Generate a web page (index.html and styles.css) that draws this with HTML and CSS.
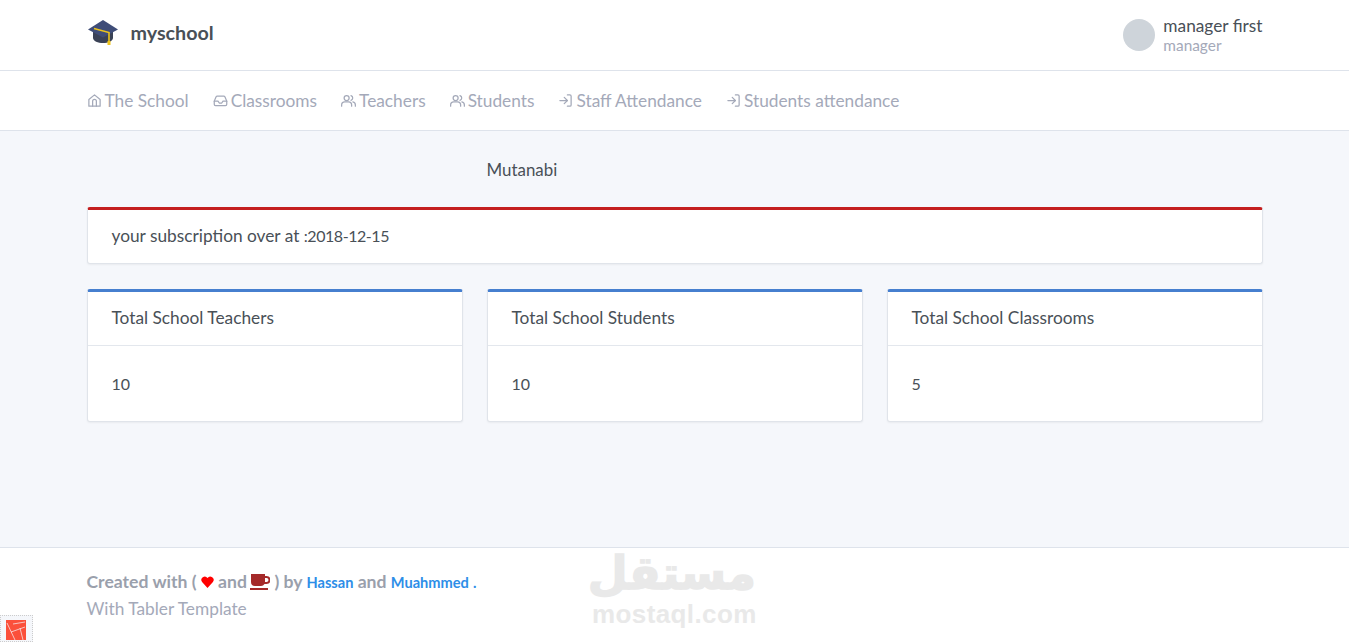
FILE: index.html
```html
<!DOCTYPE html>
<html lang="en">
<head>
<meta charset="utf-8">
<title>myschool</title>
<link rel="stylesheet" href="styles.css">
</head>
<body>
<div class="page">
  <header class="topbar">
    <div class="container topbar-inner">
      <a class="brand">
        <svg class="brand-logo" viewBox="0 0 32 32" width="32" height="32" aria-hidden="true">
          <path d="M6 13v9c0 3 5 5 10 5s10-2 10-5v-9z" fill="#3a4256"/>
          <path d="M1 13.500 16 4l15 9.500L16 21.500z" fill="#3f4d78"/>
          <path d="M7 12.500l15 4v9" fill="none" stroke="#eec41a" stroke-width="1.600"/>
          <rect x="20.500" y="25" width="3" height="4" fill="#eec41a"/>
        </svg>
        <span class="brand-name">myschool</span>
      </a>
      <div class="user">
        <span class="avatar"></span>
        <div class="user-text">
          <div class="user-name">manager first</div>
          <div class="user-role">manager</div>
        </div>
      </div>
    </div>
  </header>

  <nav class="navbar">
    <div class="container nav-inner">
      <a class="nav-link">
        <svg class="nav-icon" viewBox="0 0 24 24"><path d="M3 10.500 12 3l9 7.500V21H3z"/><path d="M9 21v-8a3 3 0 0 1 6 0v8"/></svg>The School
      </a>
      <a class="nav-link">
        <svg class="nav-icon" viewBox="0 0 24 24"><path d="M2 13v5a2 2 0 0 0 2 2h16a2 2 0 0 0 2-2v-5l-3-7a2 2 0 0 0-2-1H7a2 2 0 0 0-2 1z"/><path d="M2 13h6l2 3h4l2-3h6"/></svg>Classrooms
      </a>
      <a class="nav-link">
        <svg class="nav-icon" viewBox="0 0 24 24"><circle cx="9" cy="8" r="4"/><path d="M1 21v-2a5 5 0 0 1 5-5h6a5 5 0 0 1 5 5v2"/><path d="M16 4.200a4 4 0 0 1 0 7.600M19 14.200a5 5 0 0 1 4 4.800v2"/></svg>Teachers
      </a>
      <a class="nav-link">
        <svg class="nav-icon" viewBox="0 0 24 24"><circle cx="9" cy="8" r="4"/><path d="M1 21v-2a5 5 0 0 1 5-5h6a5 5 0 0 1 5 5v2"/><path d="M16 4.200a4 4 0 0 1 0 7.600M19 14.200a5 5 0 0 1 4 4.800v2"/></svg>Students
      </a>
      <a class="nav-link">
        <svg class="nav-icon" viewBox="0 0 24 24"><path d="M15 3h4a2 2 0 0 1 2 2v14a2 2 0 0 1-2 2h-4"/><path d="M10 17l5-5-5-5"/><path d="M15 12H3"/></svg>Staff Attendance
      </a>
      <a class="nav-link">
        <svg class="nav-icon" viewBox="0 0 24 24"><path d="M15 3h4a2 2 0 0 1 2 2v14a2 2 0 0 1-2 2h-4"/><path d="M10 17l5-5-5-5"/><path d="M15 12H3"/></svg>Students attendance
      </a>
    </div>
  </nav>

  <main class="content">
    <div class="container">
      <div class="grid title-row">
        <span></span>
        <div class="school-name">Mutanabi</div>
      </div>
      <div class="card card-alert">
        <div class="alert-body">your subscription over at <span class="date">:2018-12-15</span></div>
      </div>
      <div class="grid">
        <section class="card card-stat">
          <div class="card-header">Total School Teachers</div>
          <div class="card-body">10</div>
        </section>
        <section class="card card-stat">
          <div class="card-header">Total School Students</div>
          <div class="card-body">10</div>
        </section>
        <section class="card card-stat">
          <div class="card-header">Total School Classrooms</div>
          <div class="card-body">5</div>
        </section>
      </div>
    </div>
  </main>

  <footer class="footer">
    <div class="container">
      <div class="credit">Created with (
        <svg class="heart" viewBox="0 0 24 24"><path d="M12 23 2 12A6.200 6.200 0 0 1 12 4.500 6.200 6.200 0 0 1 22 12z"/></svg>
        and
        <svg class="cup" viewBox="0 0 20 16"><path d="M1 0h14v2h1.500a3 3 0 0 1 0 8H14.500a4 4 0 0 1-3.500 2H5a4 4 0 0 1-4-4zM15 4v4h1.500a2 2 0 0 0 0-4z" fill-rule="evenodd"/><rect x="0" y="14" width="18" height="2"/></svg>
        ) by <a class="credit-link">Hassan</a> and <a class="credit-link">Muahmmed</a> <a class="credit-link">.</a></div>
      <div class="template">With Tabler Template</div>
    </div>
    <div class="watermark">
      <div class="wm-ar" lang="ar" dir="rtl">مستقل</div>
      <div class="wm-en">mostaql.com</div>
    </div>
    <div class="debug-tab">
      <svg viewBox="0 0 20 20" width="20" height="20"><path d="M0 0h20v20H0z" fill="#fb503b"/><path d="M1 3l8 17M5 12 19 7M7 4l12-2M14 8l3 12" stroke="#f5f7fb" stroke-width=".7" fill="none"/></svg>
    </div>
  </footer>
</div>
</body>
</html>
```

FILE: styles.css
```css
* { box-sizing: border-box; }
html, body { margin: 0; height: 100%; }
body {
  font-family: "Lato", "Liberation Sans", sans-serif;
  font-size: 17.300px;
  color: #495057;
  background: #f5f7fb;
  overflow: hidden;
}
.page { display: flex; flex-direction: column; height: 642px; }
.container { width: 1200px; margin: 0 auto; padding: 0 12px; }

.topbar { height: 71px; background: #fff; border-bottom: 1px solid #dee3eb; }
.topbar-inner { display: flex; align-items: center; justify-content: space-between; height: 70px; }
.brand { display: flex; align-items: center; gap: 12px; margin-top: -6px; }
.brand-logo { display: block; }
.brand-name { font-weight: 700; font-size: 19.700px; color: #495057; }
.user { display: flex; align-items: center; gap: 8px; }
.avatar { width: 32px; height: 32px; border-radius: 50%; background: #ced4da; }
.user-text { padding-top: 1px; }
.user-name { font-size: 17.300px; line-height: 20px; color: #495057; }
.user-role { font-size: 15.400px; line-height: 19px; color: #a4a9b9; }

.navbar { height: 60px; background: #fff; border-bottom: 1px solid #dee3eb; }
.nav-inner { display: flex; align-items: center; gap: 24px; height: 59px; }
.nav-link { display: flex; align-items: center; gap: 3px; color: #a4a9b9; font-size: 17.300px; line-height: 20px; }
.nav-icon { width: 15px; height: 15px; fill: none; stroke: #a4a9b9; stroke-width: 2; stroke-linecap: round; stroke-linejoin: round; }

.content { flex: 1; }
.grid { display: grid; grid-template-columns: repeat(3, 1fr); gap: 24px; }
.title-row { height: 76px; align-items: start; padding-top: 29px; }
.school-name { line-height: 20px; font-size: 16.900px; color: #495057; }

.card {
  background: #fff;
  border: 1px solid #e0e4ea;
  border-radius: 3px;
  box-shadow: 0 1px 2px rgba(0, 0, 0, .05);
}
.card-alert { border-top: 3px solid #c41f1f; height: 57px; margin-bottom: 25px; }
.alert-body { padding: 16px 24px 0; line-height: 20px; }
.date { font-size: 16px; letter-spacing: -.45px; }
.card-stat { border-top: 3px solid #467fcf; height: 133px; }
.card-header { height: 54px; padding: 0 24px 2px; display: flex; align-items: center; border-bottom: 1px solid #e3e7ed; }
.card-body { padding: 28px 24px 0; line-height: 20px; font-size: 16px; }

.footer { position: relative; height: 95px; background: #fff; border-top: 1px solid #dee3eb; flex: none; }
.footer .container { padding-top: 24px; }
.credit { height: 20px; font-weight: 700; color: #9aa0ac; font-size: 17.600px; line-height: 20px; white-space: nowrap; }
.credit-link { color: #2d8ee8; font-size: 14.600px; }
.heart { width: 13px; height: 14px; fill: #f00; vertical-align: -1px; }
.cup { width: 20px; height: 16px; fill: #a52a2a; vertical-align: -2px; margin-left: -1px; }
.template { margin-top: 7px; color: #a4a9b9; line-height: 20px; }
.watermark { position: absolute; left: 592px; top: 0; width: 164px; text-align: center; color: #e9e9e9; }
.wm-ar { font-family: "DejaVu Sans", sans-serif; font-weight: 700; font-size: 46px; line-height: 50px; -webkit-text-stroke: 1.500px #e9e9e9; }
.wm-en { font-family: "Liberation Sans", sans-serif; font-weight: 700; font-size: 26px; letter-spacing: .4px; line-height: 26px; margin-top: 3px; white-space: nowrap; }
.debug-tab { position: absolute; left: 0; top: 67px; width: 33px; height: 27px; background: #f5f7fb; border: 1px dotted #ccc; padding: 4px 5px; overflow: hidden; }
.debug-tab svg { display: block; }
```
